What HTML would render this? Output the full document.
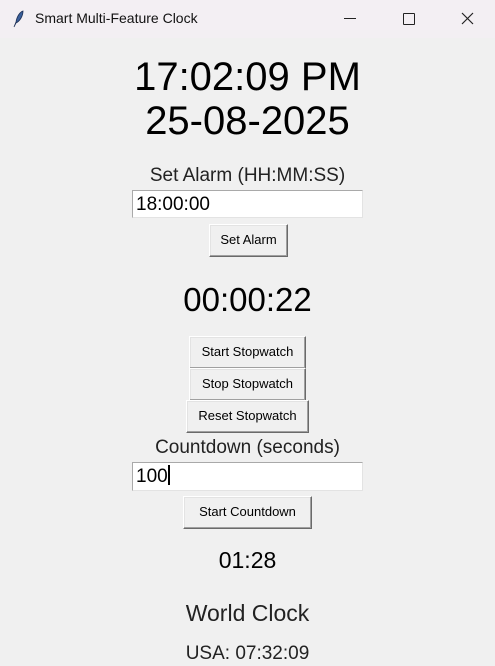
<!DOCTYPE html>
<html><head><style>
body{margin:0;width:495px;height:663px;overflow:hidden;background:#f0f0f0;font-family:"Liberation Sans",Arial,sans-serif;position:relative}
.tb{position:absolute;left:0;top:0;width:495px;height:38px;background:#f3eff3}
.tb .t{position:absolute;left:35px;top:10px;font-size:14px;color:#111}
.c{position:absolute;left:0;width:495px;text-align:center;color:#000;white-space:nowrap}
.e{position:absolute;background:#fff;border:1px solid #a9a9a9;border-right-color:#e3e3e3;border-bottom-color:#e3e3e3;box-sizing:border-box;font-size:19px;padding-left:3px;line-height:27px}
.b{position:absolute;box-sizing:border-box;background:#f0f0f0;border:1px solid;border-color:#fff #6a6a6a #6a6a6a #fff;box-shadow:inset -1px -1px 0 #a0a0a0,inset 1px 1px 0 #e3e3e3;font-size:13px;text-align:center;line-height:30px;color:#000}
</style></head><body>
<div class="tb">
<svg style="position:absolute;left:11px;top:10px" width="14" height="18" viewBox="0 0 14 18"><path d="M3 17 L5 12 C6 6 9 2 12 1 C12 6 9 11 5 13 Z" fill="#3a5f9a" stroke="#1c2f55" stroke-width=".8"/></svg>
<div class="t">Smart Multi-Feature Clock</div>
<div style="position:absolute;left:344px;top:18px;width:12px;height:1px;background:#222"></div>
<div style="position:absolute;left:403px;top:13px;width:10px;height:10px;border:1px solid #222;border-radius:1px"></div>
<svg style="position:absolute;left:461px;top:12px" width="13" height="13"><path d="M1 1L12 12M12 1L1 12" stroke="#222" stroke-width="1.2"/></svg>
</div>
<div class="c" style="top:54px;font-size:40px;line-height:46px">17:02:09 PM</div>
<div class="c" style="top:98px;font-size:40px;line-height:46px">25-08-2025</div>
<div class="c" style="top:164px;font-size:19px;line-height:24px;color:#222">Set Alarm (HH:MM:SS)</div>
<div class="e" style="left:132px;top:190px;width:231px;height:28px">18:00:00</div>
<div class="b" style="left:209px;top:224px;width:79px;height:33px">Set Alarm</div>
<div class="c" style="top:280px;font-size:33px;line-height:40px">00:00:22</div>
<div class="b" style="left:189px;top:336px;width:117px;height:33px">Start Stopwatch</div>
<div class="b" style="left:189px;top:368px;width:117px;height:33px">Stop Stopwatch</div>
<div class="b" style="left:186px;top:400px;width:123px;height:33px">Reset Stopwatch</div>
<div class="c" style="top:436px;font-size:19px;line-height:24px;color:#222">Countdown (seconds)</div>
<div class="e" style="left:132px;top:462px;width:231px;height:29px">100<span style="display:inline-block;width:2px;height:20px;background:#000;vertical-align:-3px"></span></div>
<div class="b" style="left:183px;top:496px;width:129px;height:33px">Start Countdown</div>
<div class="c" style="top:546px;font-size:23px;line-height:28px">01:28</div>
<div class="c" style="top:599px;font-size:23px;line-height:28px;color:#222">World Clock</div>
<div class="c" style="top:642px;font-size:19px;line-height:24px;color:#222">USA: 07:32:09</div>
</body></html>
